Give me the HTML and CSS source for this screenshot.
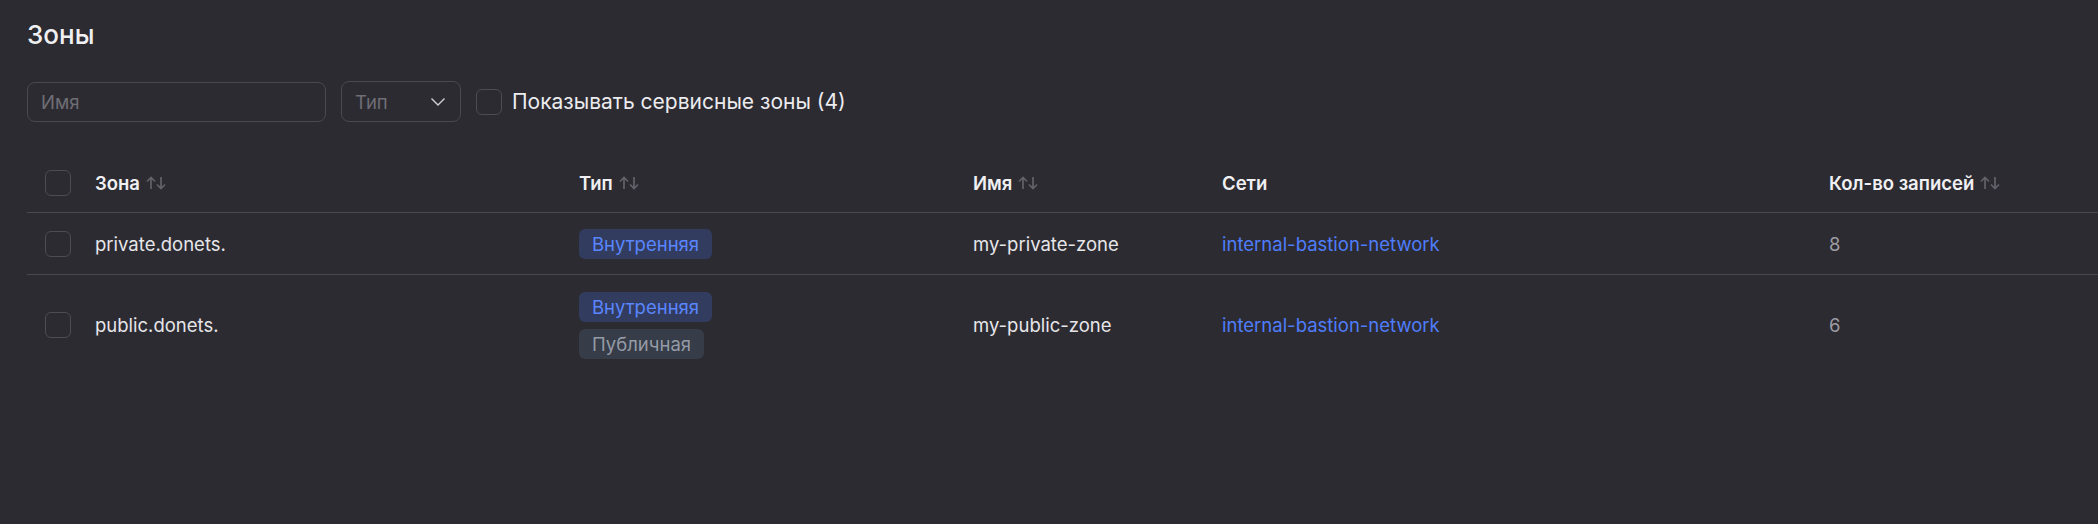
FILE: index.html
```html
<!DOCTYPE html>
<html lang="ru">
<head>
<meta charset="utf-8">
<title>Зоны</title>
<link rel="stylesheet" href="styles.css">
</head>
<body>
<div class="page">
  <h1 class="title">Зоны</h1>
  <div class="filters">
    <div class="input"><span class="placeholder">Имя</span></div>
    <div class="select">
      <span class="placeholder">Тип</span>
      <svg class="chevron" width="16" height="10" viewBox="0 0 16 10"><path d="M1.5 1.5 L8 8 L14.5 1.5" fill="none" stroke="#d0d0d4" stroke-width="1.4"/></svg>
    </div>
    <label class="check-label"><span class="checkbox"></span><span>Показывать сервисные зоны (4)</span></label>
  </div>
  <div class="table">
    <div class="row head">
      <div class="cell cb"><span class="checkbox"></span></div>
      <div class="cell">Зона <svg class="sort" width="21" height="14" viewBox="0 0 21 14"><path d="M5 13 V1.5 M1 5.5 L5 1.5 L9 5.5" fill="none" stroke="#63626a" stroke-width="1.7"/><path d="M15 1 V12.5 M11 8.5 L15 12.5 L19 8.5" fill="none" stroke="#63626a" stroke-width="1.7"/></svg></div>
      <div class="cell">Тип <svg class="sort" width="21" height="14" viewBox="0 0 21 14"><path d="M5 13 V1.5 M1 5.5 L5 1.5 L9 5.5" fill="none" stroke="#63626a" stroke-width="1.7"/><path d="M15 1 V12.5 M11 8.5 L15 12.5 L19 8.5" fill="none" stroke="#63626a" stroke-width="1.7"/></svg></div>
      <div class="cell">Имя <svg class="sort" width="21" height="14" viewBox="0 0 21 14"><path d="M5 13 V1.5 M1 5.5 L5 1.5 L9 5.5" fill="none" stroke="#63626a" stroke-width="1.7"/><path d="M15 1 V12.5 M11 8.5 L15 12.5 L19 8.5" fill="none" stroke="#63626a" stroke-width="1.7"/></svg></div>
      <div class="cell">Сети</div>
      <div class="cell">Кол-во записей <svg class="sort" width="21" height="14" viewBox="0 0 21 14"><path d="M5 13 V1.5 M1 5.5 L5 1.5 L9 5.5" fill="none" stroke="#63626a" stroke-width="1.7"/><path d="M15 1 V12.5 M11 8.5 L15 12.5 L19 8.5" fill="none" stroke="#63626a" stroke-width="1.7"/></svg></div>
    </div>
    <div class="row">
      <div class="cell cb"><span class="checkbox"></span></div>
      <div class="cell">private.donets.</div>
      <div class="cell tags"><span class="tag blue">Внутренняя</span></div>
      <div class="cell">my-private-zone</div>
      <div class="cell"><a class="link">internal-bastion-network</a></div>
      <div class="cell muted">8</div>
    </div>
    <div class="row last">
      <div class="cell cb"><span class="checkbox"></span></div>
      <div class="cell">public.donets.</div>
      <div class="cell tags"><span class="tag blue">Внутренняя</span><span class="tag gray">Публичная</span></div>
      <div class="cell">my-public-zone</div>
      <div class="cell"><a class="link">internal-bastion-network</a></div>
      <div class="cell muted">6</div>
    </div>
  </div>
</div>
</body>
</html>
```

FILE: styles.css
```css
html, body {
  margin: 0;
  padding: 0;
  background: #2c2b32;
}
body {
  font-family: Inter, "Noto Sans", sans-serif;
  color: #e6e6e9;
  font-size: 18.5px;
  width: 2098px;
  height: 524px;
  overflow: hidden;
}
.page {
  padding: 17px 0 0 27px;
}
.title {
  margin: 0;
  font-size: 26px;
  font-weight: 500;
  line-height: 36px;
  color: #f0f0f2;
}
.filters {
  display: flex;
  align-items: center;
  margin-top: 28px;
  height: 41px;
}
.input {
  box-sizing: border-box;
  width: 299px;
  height: 40px;
  border: 1px solid #4a4950;
  border-radius: 8px;
  padding: 0 13px;
  display: flex;
  align-items: center;
}
.placeholder {
  color: #6f6e75;
}
.select {
  box-sizing: border-box;
  width: 120px;
  height: 41px;
  margin-left: 15px;
  border: 1px solid #4a4950;
  border-radius: 8px;
  padding: 0 14px 0 13px;
  display: flex;
  align-items: center;
  justify-content: space-between;
}
.chevron {
  display: block;
}
.check-label {
  display: flex;
  align-items: center;
  margin-left: 15px;
  gap: 10px;
  font-size: 21px;
  color: #ececef;
}
.checkbox {
  box-sizing: border-box;
  display: block;
  width: 26px;
  height: 26px;
  border: 1px solid #4d4c53;
  border-radius: 6px;
}
.table {
  margin-top: 32px;
  display: flex;
  flex-direction: column;
}
.row {
  display: grid;
  grid-template-columns: 52px 484px 394px 249px 607px 285px;
  align-items: center;
  border-bottom: 1px solid #4a4950;
  min-height: 61px;
}
.row.head {
  min-height: 58px;
  font-weight: 600;
  color: #f0f0f2;
}
.row.last {
  border-bottom: none;
  min-height: 100px;
}
.cell {
  padding: 0 16px;
  display: flex;
  align-items: center;
  white-space: nowrap;
}
.cell.cb {
  padding: 0 0 0 18px;
}
.sort {
  margin-left: 6px;
  display: block;
}
.tags {
  flex-direction: column;
  align-items: flex-start;
  gap: 7px;
}
.tag {
  display: block;
  height: 30px;
  line-height: 30px;
  padding: 0 13px;
  border-radius: 6px;
  font-size: 18.5px;
}
.tag.blue {
  background: #323c5e;
  color: #5a86ff;
}
.tag.gray {
  background: #363c48;
  color: #959ba6;
}
.link {
  color: #4f7dfa;
  text-decoration: none;
}
.muted {
  color: #9d9ca3;
}
```
